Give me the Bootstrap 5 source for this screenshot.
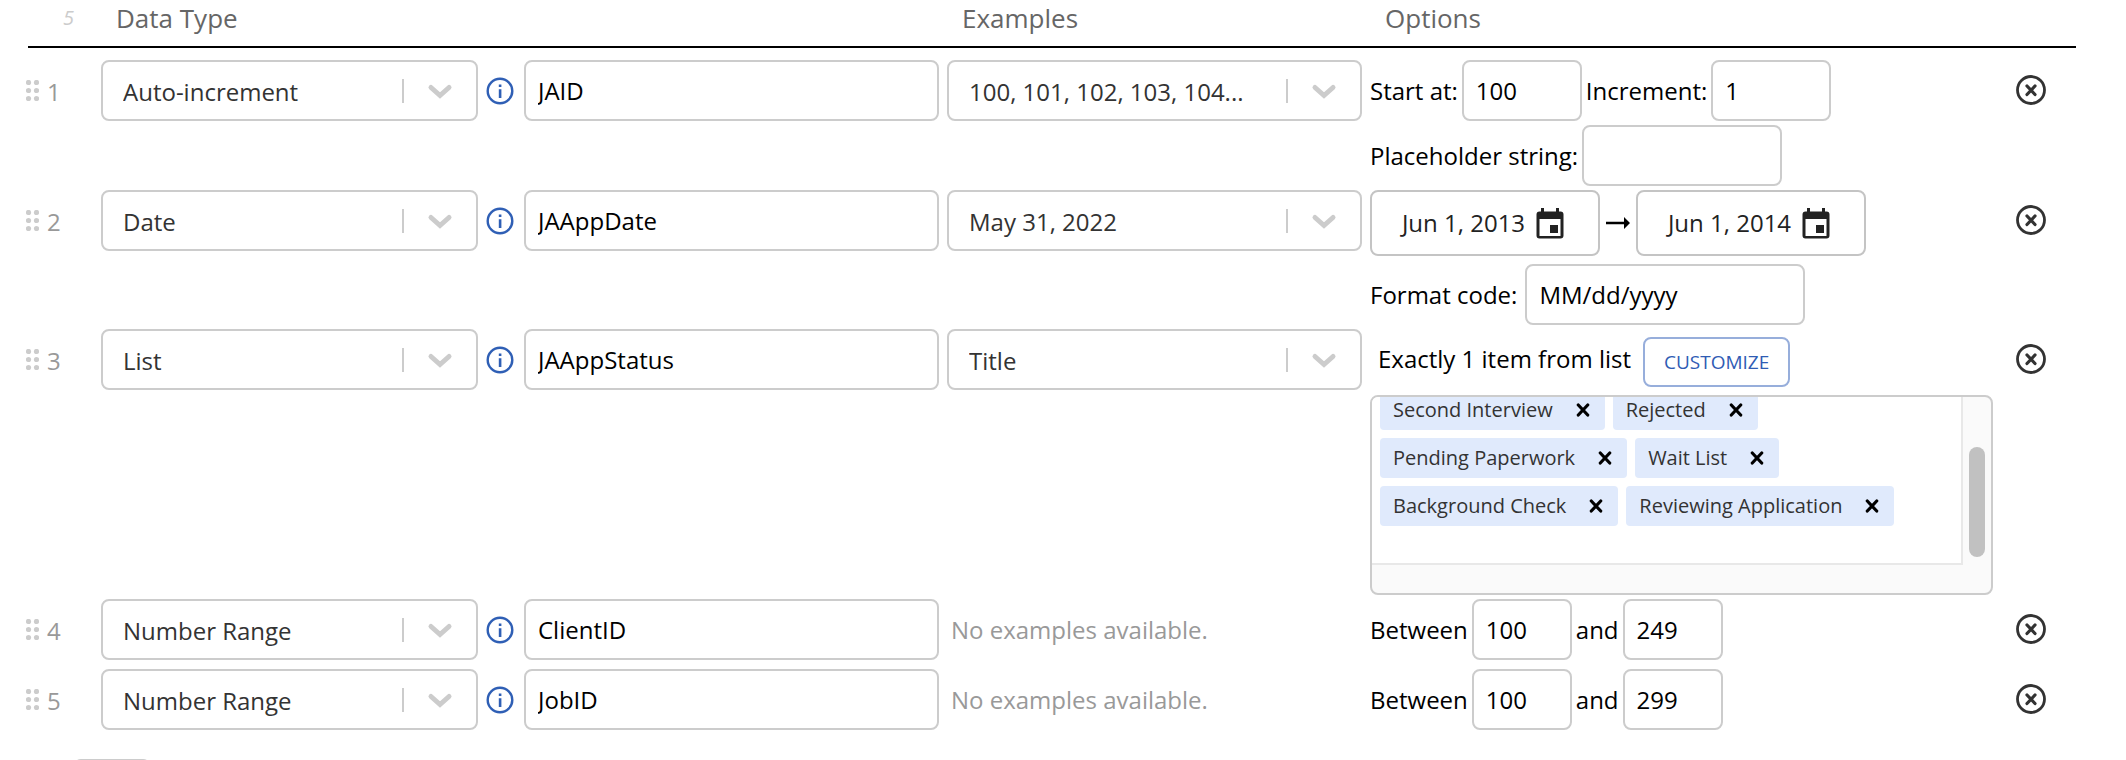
<!DOCTYPE html>
<html lang="en">
<head>
<meta charset="utf-8">
<meta name="viewport" content="width=device-width, initial-scale=1">
<title>Fields</title>
<link rel="stylesheet" href="https://cdn.jsdelivr.net/npm/bootstrap@5.3.0/dist/css/bootstrap.min.css">
<style>
body{font-family:"Open Sans","Noto Sans",sans-serif;font-size:24px;line-height:32px;color:#000;background:#fff;height:100vh;overflow:hidden}
.field-grid{display:grid;grid-template-columns:69px 377fr 30px 415fr 415fr 638fr 30px;column-gap:8px;padding:0 80px 0 24px}
.head-row{height:46px;color:#666;font-size:26px}
.head-row>div{padding-left:15px;line-height:36px}
.head-row .total{font-size:20px;font-style:italic;color:#ccc;padding-left:39px}
.head-rule{height:2px;background:#000;margin:0 50px 12px 28px}
.field-row{margin-bottom:4px}
.field-row.spaced{margin-bottom:8px}
.handle{height:61px;color:#999;gap:8px;padding:2px 0 0 2px}
.handle svg{margin-top:-2px}
.form-control,.form-select{height:61px;border:2px solid #ccc;border-radius:8px;font-size:24px;line-height:32px;color:#000;padding:0 12px;background-color:#fff}
.form-select{color:#333;padding:3px 80px 0 20px;background-repeat:no-repeat;background-position:right 20px center;background-size:54px 24px;background-image:url("data:image/svg+xml,%3Csvg xmlns='http://www.w3.org/2000/svg' viewBox='0 0 54 24'%3E%3Cpath d='M1 0v24' stroke='%23ccc' stroke-width='2'/%3E%3Cpath d='M29 8.500l9 8 9-8' fill='none' stroke='%23ccc' stroke-width='5' stroke-linecap='round'/%3E%3C/svg%3E")}
.ic-btn{border:0;background:none;padding:0;height:60px;display:flex;align-items:center;justify-content:center}
.info-btn{height:62px;justify-content:flex-start}
.opts{display:flex;flex-direction:column;gap:4px}
.opt-line{display:flex;align-items:center;gap:4px;height:61px}
.w-num{width:120px}.w-rng{width:100px}.w-str{width:200px}.w-fmt{width:280px}
.date-line{display:flex;align-items:center;gap:6px;height:66px;margin-bottom:4px}
.date-btn{width:230px;height:66px;border:2px solid #c4c4c4;border-radius:8px;background:#fff;color:#222;display:flex;align-items:center;justify-content:center;gap:11px;padding:0 4px 0 0}
.list-head{height:62px;padding:8px 0 0 8px;gap:12px}
.list-head .pick{padding-top:6px}
.btn-customize{height:50px;border:2px solid #97aedb;border-radius:8px;color:#2f5cb4;background:#fff;font-size:19px;line-height:28px;padding:0 19px}
.listbox{height:200px;margin:0 15px 0 0;border:2px solid #ccc;border-radius:8px;overflow:hidden;background:#fafafa;display:grid;grid-template-columns:1fr 28px;grid-template-rows:168px 1fr}
.chips{display:flex;flex-wrap:wrap;align-content:flex-end;gap:8px;padding:0 8px 37px;overflow:hidden;background:#fff;border-right:2px solid #e8e8e8;border-bottom:2px solid #e8e8e8}
.chip{height:40px;background:#e0eafc;color:#333;border-radius:4px;font-size:20px;line-height:28px;display:flex;align-items:center;padding:0 15px 0 13px;gap:23px}
.chip button{border:0;background:none;padding:0;display:flex}
.track{padding:50px 0 0 6px}
.thumb{width:16px;height:110px;border-radius:8px;background:#c1c1c1}
.no-ex{color:#999;line-height:61px;padding-left:4px}
.count-box{width:78px;margin:28px 0 0 73px}
</style>
</head>
<body>
<svg class="d-none">
<symbol id="grip" viewBox="0 0 13 21"><g fill="#ccc"><circle cx="2.5" cy="2.5" r="2.6"/><circle cx="10.5" cy="2.5" r="2.6"/><circle cx="2.5" cy="10.5" r="2.6"/><circle cx="10.5" cy="10.5" r="2.6"/><circle cx="2.5" cy="18.5" r="2.6"/><circle cx="10.5" cy="18.5" r="2.6"/></g></symbol>
<symbol id="info" viewBox="0 0 28 28"><circle cx="14" cy="14" r="12.3" fill="none" stroke="#2f5fb5" stroke-width="2.4"/><path d="M12.8 7.4h2.6v2.6h-2.6zM12.8 12.3h2.6v8.6h-2.6z" fill="#2f5fb5"/></symbol>
<symbol id="del" viewBox="0 0 30 30"><circle cx="15" cy="15" r="13.5" fill="none" stroke="#333" stroke-width="2.8"/><path d="M11 11l8 8.500M19 11l-8 8.500" stroke="#333" stroke-width="3.2" stroke-linecap="round"/></symbol>
<symbol id="ex" viewBox="0 0 14 14"><path d="M2.300 2l9.400 10M11.700 2l-9.400 10" stroke="#000" stroke-width="3.200" stroke-linecap="round"/></symbol>
<symbol id="cal" viewBox="0 0 28 31"><path d="M24.500 3.500H23V0h-3v3.500H8V0H5v3.500H3.500A3 3 0 0 0 .5 6.500v21a3 3 0 0 0 3 3h21a3 3 0 0 0 3-3v-21a3 3 0 0 0-3-3zm0 24.500h-21V11h21zM22 17h-8v8h8z" fill="#222"/></symbol>
<symbol id="arrow" viewBox="0 0 24 14"><path d="M0 5.700h18V1l6 6-6 6V8.300H0z"/></symbol>
</svg>
<header class="field-grid head-row">
<div class="total">5</div><div>Data Type</div><div></div><div></div><div>Examples</div><div>Options</div>
</header>
<div class="head-rule"></div>
<main>
<section class="field-grid field-row">
<div class="handle d-flex align-items-center"><svg width="13" height="21"><use href="#grip"/></svg>1</div>
<select class="form-select" aria-label="Data type"><option>Auto-increment</option></select>
<button class="ic-btn info-btn" aria-label="Info"><svg width="28" height="28"><use href="#info"/></svg></button>
<input class="form-control" aria-label="Field name" value="JAID">
<select class="form-select" aria-label="Example"><option>100, 101, 102, 103, 104...</option></select>
<div class="opts">
<div class="opt-line"><label for="start">Start at:</label><input id="start" class="form-control w-num" value="100"><label for="inc">Increment:</label><input id="inc" class="form-control w-num" value="1"></div>
<div class="opt-line"><label for="ph">Placeholder string:</label><input id="ph" class="form-control w-str"></div>
</div>
<button class="ic-btn" aria-label="Delete"><svg width="30" height="30"><use href="#del"/></svg></button>
</section>
<section class="field-grid field-row">
<div class="handle d-flex align-items-center"><svg width="13" height="21"><use href="#grip"/></svg>2</div>
<select class="form-select" aria-label="Data type"><option>Date</option></select>
<button class="ic-btn info-btn" aria-label="Info"><svg width="28" height="28"><use href="#info"/></svg></button>
<input class="form-control" aria-label="Field name" value="JAAppDate">
<select class="form-select" aria-label="Example"><option>May 31, 2022</option></select>
<div class="opts">
<div class="date-line"><button class="date-btn">Jun 1, 2013 <svg width="28" height="31"><use href="#cal"/></svg></button><svg width="24" height="14"><use href="#arrow"/></svg><button class="date-btn">Jun 1, 2014 <svg width="28" height="31"><use href="#cal"/></svg></button></div>
<div class="opt-line gap-2"><label for="fmt">Format code:</label><input id="fmt" class="form-control w-fmt" value="MM/dd/yyyy"></div>
</div>
<button class="ic-btn" aria-label="Delete"><svg width="30" height="30"><use href="#del"/></svg></button>
</section>
<section class="field-grid field-row">
<div class="handle d-flex align-items-center"><svg width="13" height="21"><use href="#grip"/></svg>3</div>
<select class="form-select" aria-label="Data type"><option>List</option></select>
<button class="ic-btn info-btn" aria-label="Info"><svg width="28" height="28"><use href="#info"/></svg></button>
<input class="form-control" aria-label="Field name" value="JAAppStatus">
<select class="form-select" aria-label="Example"><option>Title</option></select>
<div class="opts">
<div class="d-flex list-head"><span class="pick">Exactly 1 item from list</span><button class="btn btn-customize">CUSTOMIZE</button></div>
<div class="listbox">
<div class="chips">
<span class="chip">Second Interview<button aria-label="Remove"><svg width="14" height="14"><use href="#ex"/></svg></button></span>
<span class="chip">Rejected<button aria-label="Remove"><svg width="14" height="14"><use href="#ex"/></svg></button></span>
<span class="chip">Pending Paperwork<button aria-label="Remove"><svg width="14" height="14"><use href="#ex"/></svg></button></span>
<span class="chip">Wait List<button aria-label="Remove"><svg width="14" height="14"><use href="#ex"/></svg></button></span>
<span class="chip">Background Check<button aria-label="Remove"><svg width="14" height="14"><use href="#ex"/></svg></button></span>
<span class="chip">Reviewing Application<button aria-label="Remove"><svg width="14" height="14"><use href="#ex"/></svg></button></span>
</div>
<div class="track"><div class="thumb"></div></div>
</div>
</div>
<button class="ic-btn" aria-label="Delete"><svg width="30" height="30"><use href="#del"/></svg></button>
</section>
<section class="field-grid field-row spaced">
<div class="handle d-flex align-items-center"><svg width="13" height="21"><use href="#grip"/></svg>4</div>
<select class="form-select" aria-label="Data type"><option>Number Range</option></select>
<button class="ic-btn info-btn" aria-label="Info"><svg width="28" height="28"><use href="#info"/></svg></button>
<input class="form-control" aria-label="Field name" value="ClientID">
<div class="no-ex">No examples available.</div>
<div class="opt-line"><label for="a4">Between</label><input id="a4" class="form-control w-rng" value="100"><label for="b4">and</label><input id="b4" class="form-control w-rng" value="249"></div>
<button class="ic-btn" aria-label="Delete"><svg width="30" height="30"><use href="#del"/></svg></button>
</section>
<section class="field-grid field-row">
<div class="handle d-flex align-items-center"><svg width="13" height="21"><use href="#grip"/></svg>5</div>
<select class="form-select" aria-label="Data type"><option>Number Range</option></select>
<button class="ic-btn info-btn" aria-label="Info"><svg width="28" height="28"><use href="#info"/></svg></button>
<input class="form-control" aria-label="Field name" value="JobID">
<div class="no-ex">No examples available.</div>
<div class="opt-line"><label for="a5">Between</label><input id="a5" class="form-control w-rng" value="100"><label for="b5">and</label><input id="b5" class="form-control w-rng" value="299"></div>
<button class="ic-btn" aria-label="Delete"><svg width="30" height="30"><use href="#del"/></svg></button>
</section>
<input class="form-control count-box" aria-label="Number of fields to add">
</main>
<script src="https://cdn.jsdelivr.net/npm/bootstrap@5.3.0/dist/js/bootstrap.bundle.min.js"></script>
</body>
</html>
